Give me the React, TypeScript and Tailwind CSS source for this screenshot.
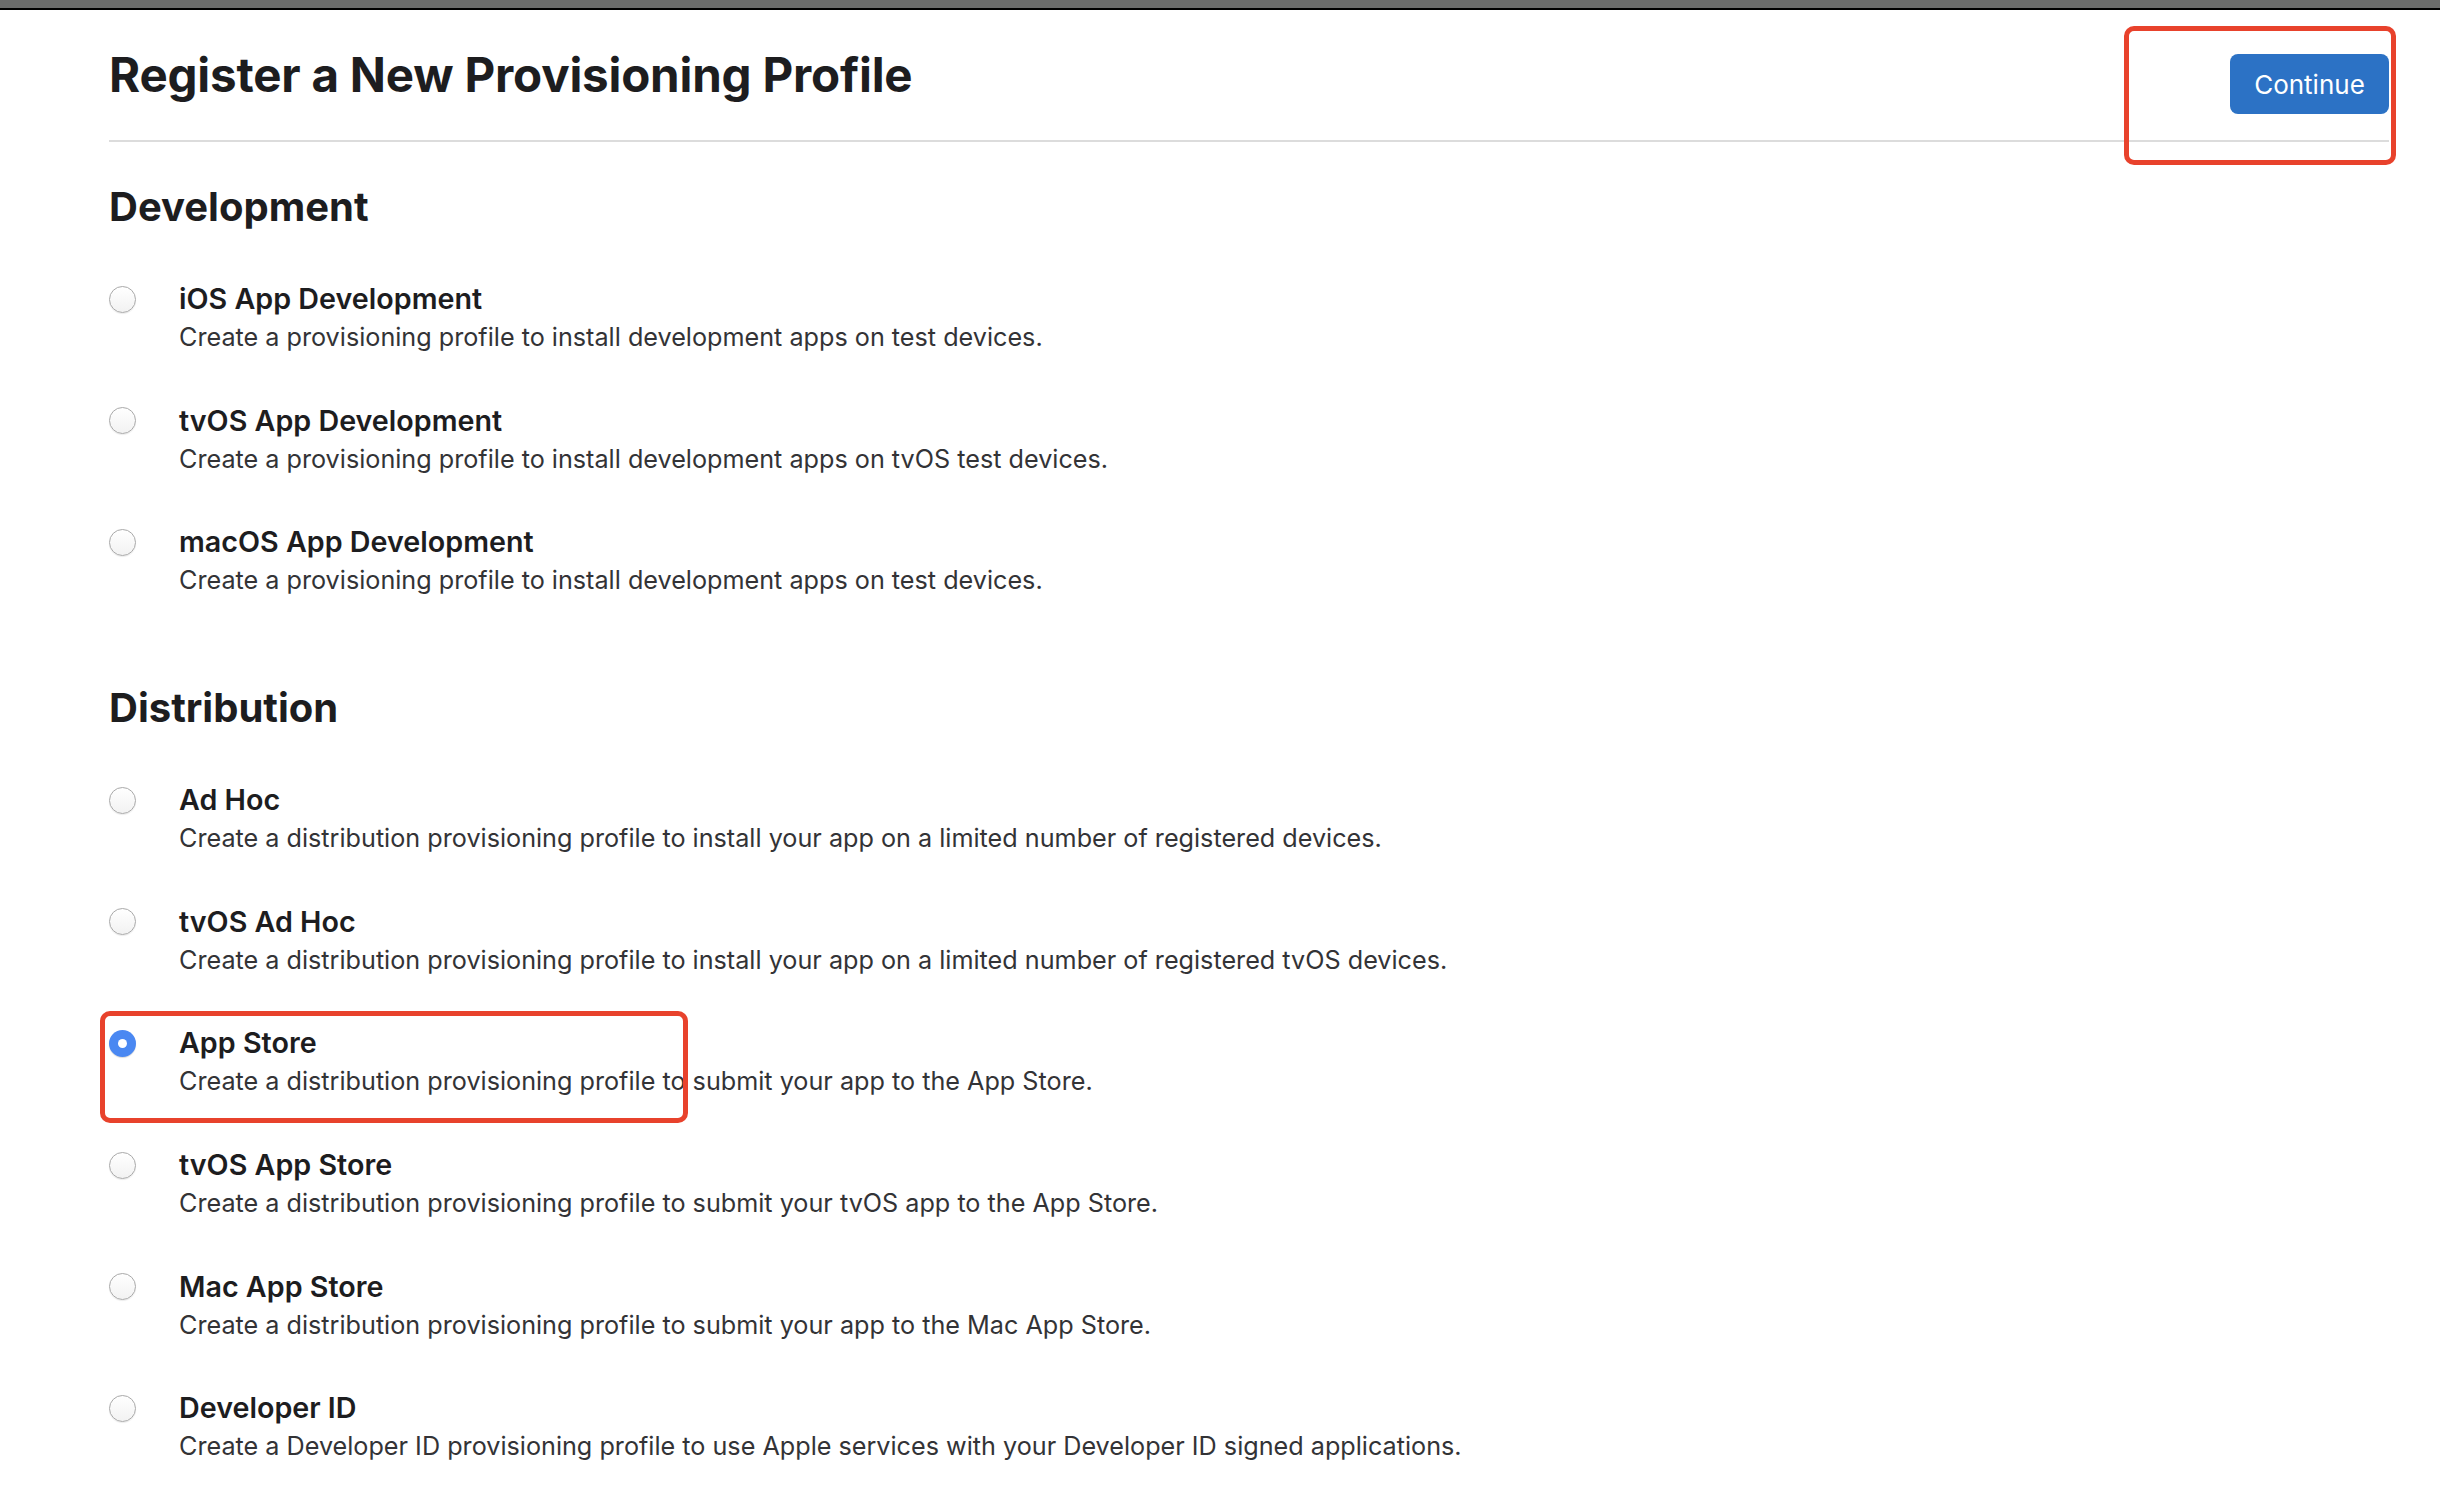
import React, { useState } from 'react';

type Option = {
  id: string;
  title: string;
  description: string;
};

const development: Option[] = [
  {
    id: 'ios-dev',
    title: 'iOS App Development',
    description: 'Create a provisioning profile to install development apps on test devices.',
  },
  {
    id: 'tvos-dev',
    title: 'tvOS App Development',
    description: 'Create a provisioning profile to install development apps on tvOS test devices.',
  },
  {
    id: 'macos-dev',
    title: 'macOS App Development',
    description: 'Create a provisioning profile to install development apps on test devices.',
  },
];

const distribution: Option[] = [
  {
    id: 'adhoc',
    title: 'Ad Hoc',
    description:
      'Create a distribution provisioning profile to install your app on a limited number of registered devices.',
  },
  {
    id: 'tvos-adhoc',
    title: 'tvOS Ad Hoc',
    description:
      'Create a distribution provisioning profile to install your app on a limited number of registered tvOS devices.',
  },
  {
    id: 'appstore',
    title: 'App Store',
    description: 'Create a distribution provisioning profile to submit your app to the App Store.',
  },
  {
    id: 'tvos-appstore',
    title: 'tvOS App Store',
    description: 'Create a distribution provisioning profile to submit your tvOS app to the App Store.',
  },
  {
    id: 'mac-appstore',
    title: 'Mac App Store',
    description: 'Create a distribution provisioning profile to submit your app to the Mac App Store.',
  },
  {
    id: 'developer-id',
    title: 'Developer ID',
    description:
      'Create a Developer ID provisioning profile to use Apple services with your Developer ID signed applications.',
  },
];

const Radio: React.FC<{ checked: boolean }> = ({ checked }) =>
  checked ? (
    <span className="h-[27px] w-[27px] rounded-full bg-[#4a88f2] flex items-center justify-center shadow-[0_1px_1px_rgba(0,0,0,0.15)]">
      <span className="h-[9px] w-[9px] rounded-full bg-white" />
    </span>
  ) : (
    <span className="h-[27px] w-[27px] rounded-full border border-[#a9a9a9] bg-gradient-to-b from-white to-[#f2f2f2] shadow-[0_1px_1px_rgba(0,0,0,0.08)]" />
  );

const OptionRow: React.FC<{ option: Option; selected: string; onSelect: (id: string) => void }> = ({
  option,
  selected,
  onSelect,
}) => (
  <label className="flex items-start cursor-pointer" onClick={() => onSelect(option.id)}>
    <div className="w-[70px] h-[38px] flex items-center shrink-0">
      <Radio checked={selected === option.id} />
    </div>
    <div>
      <div className="text-[28.7px] leading-[38px] font-semibold text-[#1d1d1f]">{option.title}</div>
      <div className="text-[25.2px] leading-[38px] text-[#333336]">{option.description}</div>
    </div>
  </label>
);

export default function App() {
  const [selected, setSelected] = useState('appstore');

  return (
    <div className="min-h-screen bg-white font-['Inter','Liberation_Sans',sans-serif] antialiased">
      {/* window chrome */}
      <div className="h-[8px] bg-[#6b6c6b]" />
      <div className="h-[2px] bg-black" />

      <div className="relative pl-[109px] pr-[51px]">
        {/* Header */}
        <div className="flex items-start justify-between border-b-2 border-[#dcdcdc] pt-[37px] pb-[26px]">
          <h1 className="text-[47.5px] leading-[56px] font-bold text-[#1d1d1f] tracking-[-0.2px]">
            Register a New Provisioning Profile
          </h1>
          <button className="mt-[7px] h-[60px] w-[159px] rounded-[8px] bg-[#2c72c5] text-white text-[26px]">
            Continue
          </button>
        </div>

        {/* Development */}
        <h2 className="mt-[41px] text-[40px] leading-[48px] font-bold text-[#1d1d1f]">Development</h2>
        <div className="mt-[49px] flex flex-col gap-[45.5px]">
          {development.map((o) => (
            <OptionRow key={o.id} option={o} selected={selected} onSelect={setSelected} />
          ))}
        </div>

        {/* Distribution */}
        <h2 className="mt-[85px] text-[40px] leading-[48px] font-bold text-[#1d1d1f]">Distribution</h2>
        <div className="mt-[49px] flex flex-col gap-[45.7px] pb-[60px]">
          {distribution.map((o) => (
            <OptionRow key={o.id} option={o} selected={selected} onSelect={setSelected} />
          ))}
        </div>
      </div>

      {/* annotation boxes */}
      <div className="absolute left-[2124px] top-[26px] w-[272px] h-[139px] border-[5px] border-[#e8422c] rounded-[10px] pointer-events-none" />
      <div className="absolute left-[100px] top-[1011px] w-[588px] h-[112px] border-[5px] border-[#e8422c] rounded-[10px] pointer-events-none" />
    </div>
  );
}
